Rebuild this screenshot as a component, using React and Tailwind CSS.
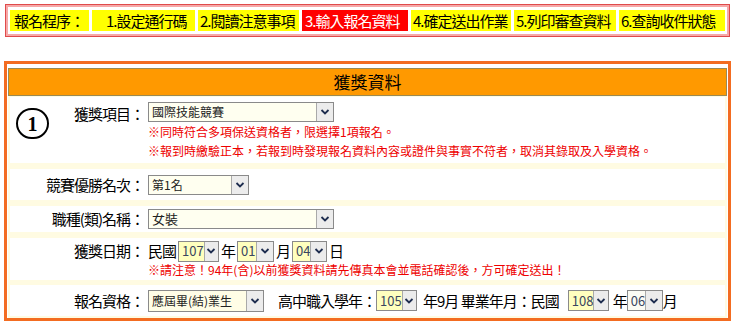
import React from 'react';

const Arrow = () => (
  <div className="w-[17px] h-full bg-[#ececec] border-l border-[#a9a9a9] flex items-center justify-center">
    <svg width="10" height="8" viewBox="0 0 10 8">
      <polyline points="1.5,2 5,5.5 8.5,2" fill="none" stroke="#1e2d4f" strokeWidth="1.8" />
    </svg>
  </div>
);

// fake select box
const Sel = ({ w, h = 'h-[20px]', bg = 'bg-[#fffff0]', text, textCls = 'text-[12px] text-[#222]' }) => (
  <div className={`flex shrink-0 border border-[#8a8a8a] ${w} ${h}`}>
    <div className={`flex-1 flex items-center pl-[3px] ${bg} ${textCls}`}>{text}</div>
    <Arrow />
  </div>
);

const steps = [
  { t: '報名程序：', w: 'w-[79px]', cls: 'bg-[#ffff00] text-black pl-[4px]' },
  { t: '1.設定通行碼', w: 'w-[103px]', cls: 'bg-[#ffff00] text-black pl-[14px]' },
  { t: '2.閱讀注意事項', w: 'w-[101px]', cls: 'bg-[#ffff00] text-black pl-[2px]' },
  { t: '3.輸入報名資料', w: 'w-[106px]', cls: 'bg-[#ff0000] text-white pl-[3px]' },
  { t: '4.確定送出作業', w: 'w-[100px]', cls: 'bg-[#ffff00] text-black pl-[2px]' },
  { t: '5.列印審查資料', w: 'w-[102px]', cls: 'bg-[#ffff00] text-black pl-[2px]' },
  { t: '6.查詢收件狀態', w: 'w-[106px]', cls: 'bg-[#ffff00] text-black pl-[2px]' },
];

export default function App() {
  return (
    <div className="w-[738px] h-[328px] bg-white overflow-hidden font-['Noto_Sans_CJK_TC','Noto_Sans',sans-serif] text-black">
      {/* Steps bar */}
      <div className="ml-[5px] mt-[4px] w-[725px] border border-[#e04a4a]">
        <div className="border-2 border-[#f6a8a8] flex gap-[3px] px-[2px] py-[3px]">
          {steps.map((s) => (
            <div key={s.t} className={`${s.w} ${s.cls} h-[21px] leading-[21px] text-[15px] tracking-[-1px] whitespace-nowrap overflow-hidden`}>
              {s.t}
            </div>
          ))}
        </div>
      </div>

      {/* Award panel */}
      <div className="ml-[4px] mt-[24px] w-[727px] h-[260px] border-[3px] border-[#f36c21] bg-white pt-[4px] px-[1px]">
        <div className="h-[28px] bg-[#ff9900] border border-[#9a8a55] text-center text-[17px] leading-[26px]">
          獲獎資料
        </div>

        <div className="bg-[#fffbe2] pt-[1px] px-[2px] pb-[2px] flex flex-col text-[15px] tracking-[-1px]">
          {/* row 1 */}
          <div className="h-[66px] bg-white flex">
            <div className="relative w-[134px] shrink-0 text-right leading-[20px] pt-[7px]">
              <div className="absolute left-[6px] top-[11px] w-[33px] h-[31px] rounded-full border-2 border-black flex items-center justify-center font-['Liberation_Serif',serif] font-bold text-[20px] leading-none tracking-normal">
                1
              </div>
              獲獎項目：
            </div>
            <div className="flex-1 pl-[4px] pt-[5px] tracking-normal">
              <Sel w="w-[186px]" text="國際技能競賽" />
              <div className="text-[12px] leading-[19px] text-[#ee0000] whitespace-nowrap">
                ※同時符合多項保送資格者，限選擇1項報名。
              </div>
              <div className="text-[12px] leading-[19px] text-[#ee0000] whitespace-nowrap">
                ※報到時繳驗正本，若報到時發現報名資料內容或證件與事實不符者，取消其錄取及入學資格。
              </div>
            </div>
          </div>

          {/* row 2 */}
          <div className="mt-[6px] h-[31px] bg-white flex items-center">
            <div className="w-[134px] shrink-0 text-right leading-[20px]">競賽優勝名次：</div>
            <div className="flex-1 pl-[4px] tracking-normal">
              <Sel w="w-[101px]" text="第1名" />
            </div>
          </div>

          {/* row 3 */}
          <div className="mt-[6px] h-[26px] bg-white flex items-center">
            <div className="w-[134px] shrink-0 text-right leading-[20px]">職種(類)名稱：</div>
            <div className="flex-1 pl-[4px] tracking-normal">
              <Sel w="w-[186px]" text="女裝" textCls="text-[13px] text-[#222]" />
            </div>
          </div>

          {/* row 4 */}
          <div className="mt-[6px] h-[42px] bg-white flex">
            <div className="w-[134px] shrink-0 text-right leading-[22px] pt-[2px]">獲獎日期：</div>
            <div className="flex-1 pl-[4px] pt-[2px]">
              <div className="flex items-center h-[22px] leading-[22px]">
                <span className="mr-[2px]">民國</span>
                <Sel w="w-[41px]" h="h-[21px]" bg="bg-[#ffffbe]" text="107" textCls="text-[13px] text-[#3a4660] tracking-normal" />
                <span className="mx-[2px]">年</span>
                <Sel w="w-[37px]" h="h-[21px]" bg="bg-[#ffffbe]" text="01" textCls="text-[13px] text-[#3a4660] tracking-normal" />
                <span className="mx-[2px]">月</span>
                <Sel w="w-[35px]" h="h-[21px]" bg="bg-[#ffffbe]" text="04" textCls="text-[13px] text-[#3a4660] tracking-normal" />
                <span className="ml-[2px]">日</span>
              </div>
              <div className="text-[12px] leading-[16px] text-[#ee0000] whitespace-nowrap tracking-normal">
                ※請注意！94年(含)以前獲獎資料請先傳真本會並電話確認後，方可確定送出！
              </div>
            </div>
          </div>

          {/* row 5 */}
          <div className="mt-[5px] h-[31px] bg-white flex items-center">
            <div className="w-[134px] shrink-0 text-right leading-[20px]">報名資格：</div>
            <div className="flex-1 pl-[4px] flex items-center leading-[22px] whitespace-nowrap">
              <Sel w="w-[116px]" h="h-[22px]" bg="bg-[#fffde6]" text="應屆畢(結)業生" textCls="text-[12px] text-[#222] tracking-normal" />
              <span className="ml-[14px]">高中職入學年：</span>
              <Sel w="w-[41px]" h="h-[21px]" bg="bg-[#ffffbe]" text="105" textCls="text-[13px] text-[#3a4660] tracking-normal" />
              <span className="ml-[6px]">年9月 畢業年月：民國</span>
              <span className="w-[9px]" />
              <Sel w="w-[41px]" h="h-[21px]" bg="bg-[#ffffbe]" text="108" textCls="text-[13px] text-[#3a4660] tracking-normal" />
              <span className="ml-[4px]">年</span>
              <Sel w="w-[36px]" h="h-[21px]" bg="bg-[#fbfbf4]" text="06" textCls="text-[13px] text-[#3a4660] tracking-normal" />
              <span>月</span>
            </div>
          </div>
        </div>
      </div>
    </div>
  );
}
